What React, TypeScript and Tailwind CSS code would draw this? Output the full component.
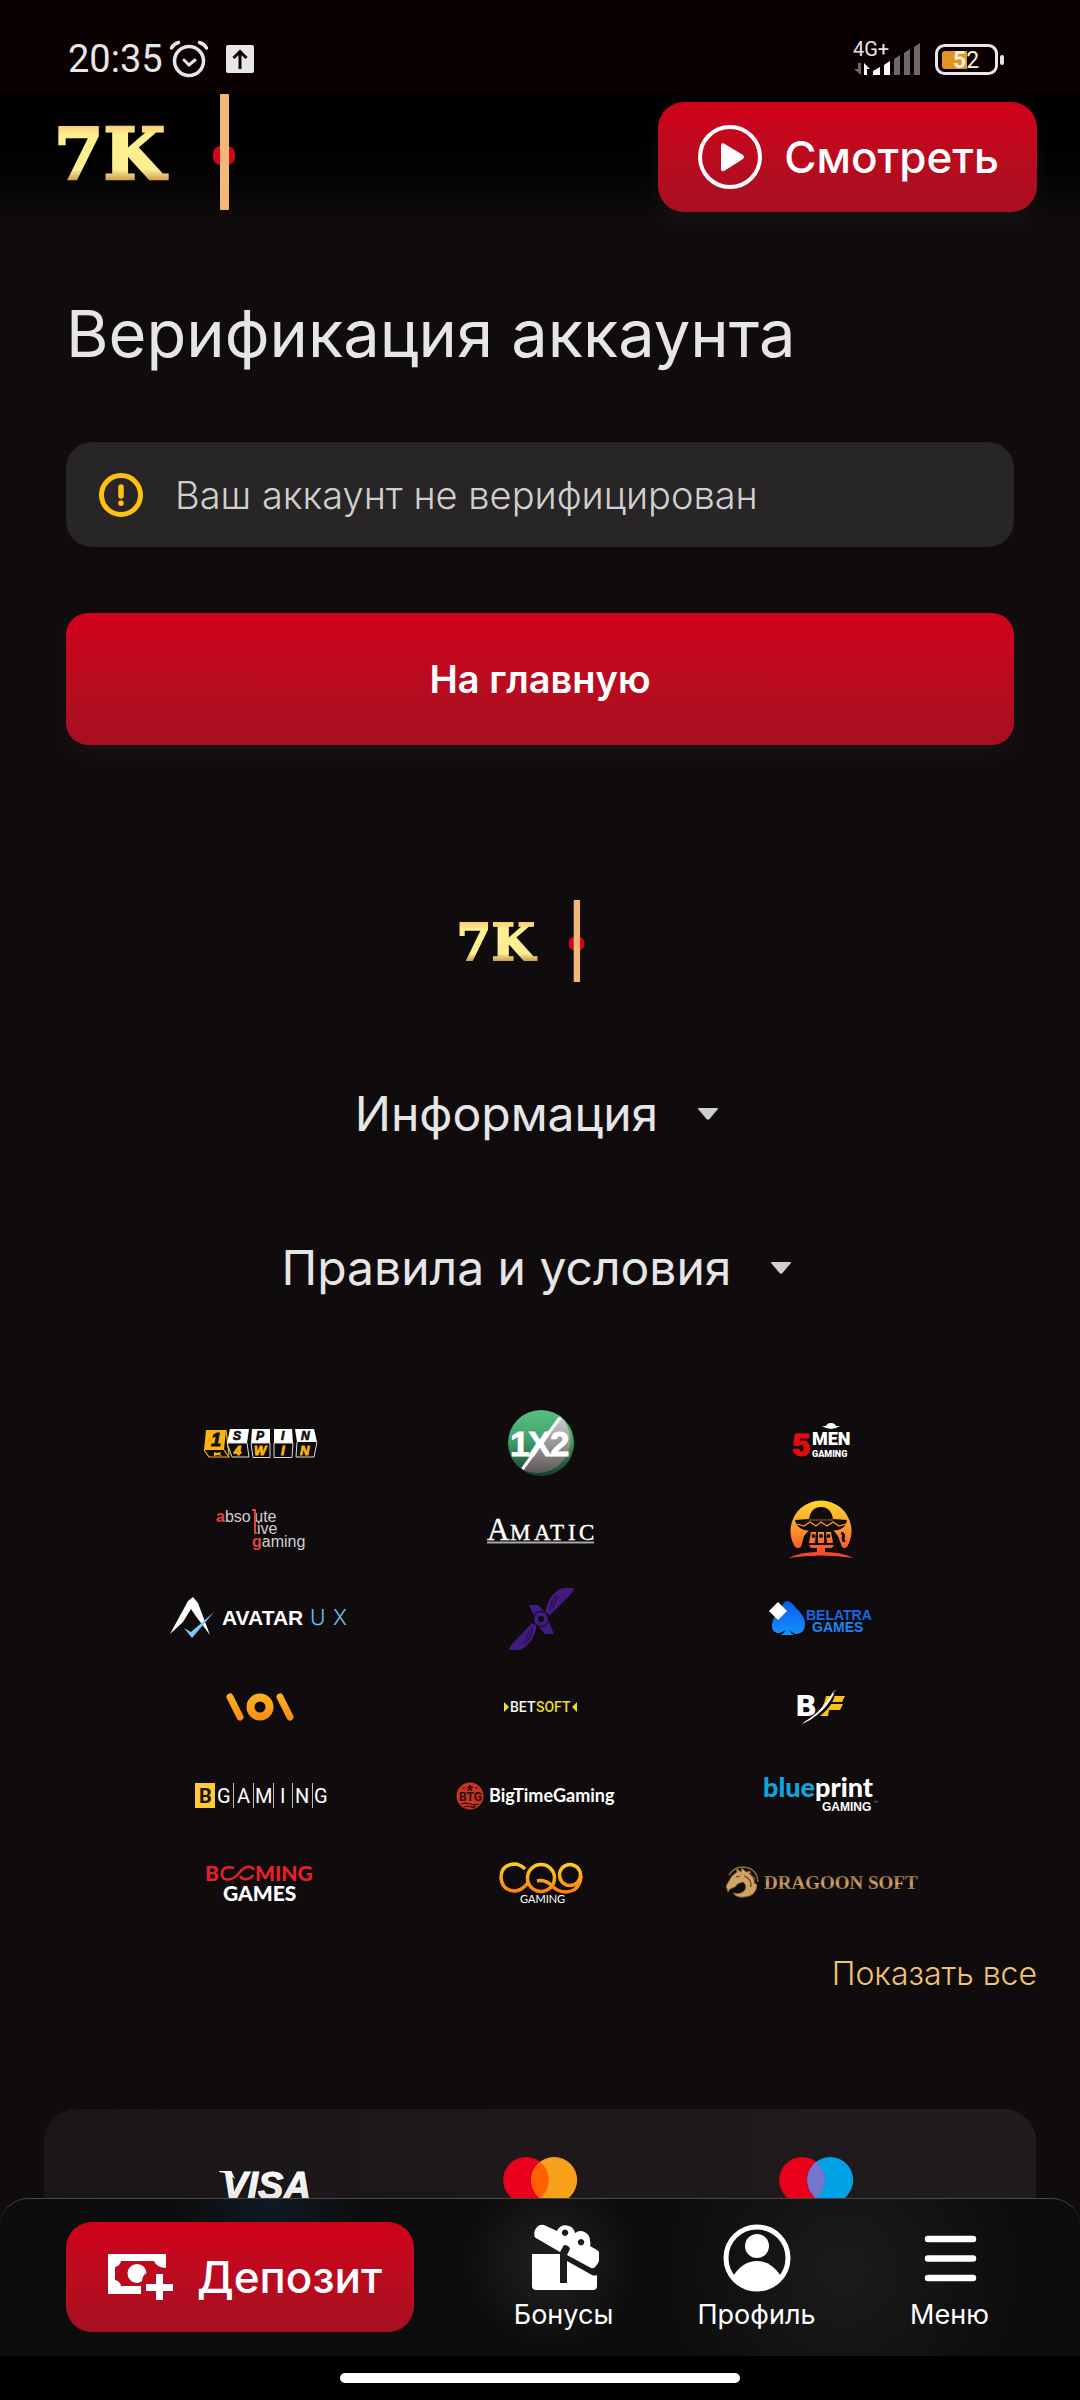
import React from "react";

type LogoProps = { label: string; children: React.ReactNode };

function Logo({ label, children }: LogoProps) {
  return (
    <a href="#" aria-label={label} className="flex h-[88px] items-center justify-center">
      <svg width="280" height="88" viewBox="0 0 280 88" role="img" aria-label={label}>
        {children}
      </svg>
    </a>
  );
}

const grotesk = "Roboto,sans-serif";
const arial = "'Liberation Sans',sans-serif";

function Brand({ id, className }: { id: string; className: string }) {
  return (
    <svg viewBox="0 0 180 116" className={className} role="img" aria-label="7K">
      <defs>
        <linearGradient id={id} x1="0" y1="30" x2="0" y2="87" gradientUnits="userSpaceOnUse">
          <stop offset="0" stopColor="#fdc66f" />
          <stop offset="0.2" stopColor="#fdf08f" />
          <stop offset="0.8" stopColor="#fbee93" />
          <stop offset="1" stopColor="#c8974b" />
        </linearGradient>
      </defs>
      <text
        x="-2"
        y="85"
        fontFamily="'DejaVu Serif',serif"
        fontWeight="700"
        fontSize="71"
        fill={`url(#${id})`}
        stroke={`url(#${id})`}
        strokeWidth="2.500"
      >
        7K
      </text>
      <ellipse cx="168" cy="46" rx="4" ry="6" fill="#c8081c" />
      <rect x="157" y="52" width="22" height="19" rx="8" fill="#d3041b" />
      <rect x="164" y="0" width="9" height="116" rx="1" fill="#f2b877" />
    </svg>
  );
}

function ProviderGrid() {
  return (
    <div className="mx-auto mt-[53px] grid w-full max-w-[840px] grid-cols-3">
      <Logo label="1spin4win">
        <path d="M86 32h20l-2 20H84z" fill="#fdb40c" />
        <path d="M84 52l5 7h20l-5-7M106 32l3 25" fill="none" stroke="#fdb40c" strokeWidth="1.2" />
        <path d="M94 54l3 1 4-1-1 2 2 2-4-1-4 1z" fill="#fdb40c" />
        <path d="M110 31h19l-2 14h-20zM132 31h18v14h-19zM154 31h18l1 14h-19zM175 31h19l3 13h-20z" fill="#fff" />
        <path
          d="M107 45l5 14h17l-2-14zM131 45l2 14.500h17V45zM154 45v14.500h18l1-14.500zM177 44l-1 15h18l3-15"
          fill="#0d0b0b"
          stroke="#ddd"
          strokeWidth="1"
        />
        <g fontFamily={arial} fontWeight="700" fontStyle="italic">
          <text x="91" y="48" fontSize="18" fill="#111" stroke="#111">1</text>
          <g fontSize="12" fill="#111" stroke="#111" strokeWidth="0.7">
            <text x="113" y="42">S</text>
            <text x="136" y="42">P</text>
            <text x="161" y="42">I</text>
            <text x="181" y="42">N</text>
          </g>
          <g fontSize="13" fill="#fdb40c" stroke="#fdb40c" strokeWidth="0.8">
            <text x="114" y="57">4</text>
            <text x="134" y="57">W</text>
            <text x="161" y="57">I</text>
            <text x="180" y="57">N</text>
          </g>
        </g>
      </Logo>
      <Logo label="1X2">
        <defs>
          <linearGradient id="gGreen" x1="0" y1="0" x2="0" y2="1">
            <stop offset="0" stopColor="#55c183" />
            <stop offset="0.45" stopColor="#43a16b" />
            <stop offset="1" stopColor="#143f27" />
          </linearGradient>
          <linearGradient id="gGrey" x1="0" y1="0" x2="0" y2="1">
            <stop offset="0" stopColor="#d0cfcf" />
            <stop offset="1" stopColor="#5d5857" />
          </linearGradient>
        </defs>
        <circle cx="141" cy="45" r="33" fill="url(#gGreen)" />
        <path d="M160.500 18.500A33 33 0 0 1 122.500 71.500z" fill="url(#gGrey)" />
        <path d="M160 19.500L122.500 71" stroke="#fff" strokeWidth="3" />
        <g fontFamily={arial} fontWeight="700" fontSize="35" fill="#fff" stroke="#fff" strokeWidth="0.8">
          <text x="110" y="58">1</text>
          <text x="128" y="58">X</text>
          <text x="150" y="58">2</text>
        </g>
      </Logo>
      <Logo label="5Men Gaming">
        <g fontFamily={grotesk} fontWeight="900">
          <text x="112" y="58" fontSize="32" fill="#e30b0b" stroke="#e30b0b">5</text>
          <text x="132" y="47" fontSize="18" fill="#fff">MEN</text>
          <text x="132" y="59" fontSize="9" fill="#fff">GAMING</text>
        </g>
        <path d="M142 28q9 6 18 0l-4 0q-1-3-5-3t-5 3z" fill="#fff" />
      </Logo>

      <Logo label="absolute live gaming">
        <g fontFamily={arial} fontSize="16" fill="#cfcfcf">
          <text x="96" y="36">
            <tspan fill="#e0433c" fontWeight="700">a</tspan>bso
            <tspan fill="#100c0d">l</tspan>ute
          </text>
          <text x="137" y="48">ive</text>
          <text x="132" y="61">
            <tspan fill="#e0433c" fontWeight="700">g</tspan>aming
          </text>
        </g>
        <path d="M132 24h3v23h2" fill="none" stroke="#e0433c" strokeWidth="2" />
      </Logo>
      <Logo label="Amatic">
        <g fontFamily="'Liberation Serif',serif" fill="#fff" stroke="#fff" strokeWidth="0.4">
          <text x="87" y="54" fontSize="31">A</text>
          <g fontSize="23">
            <text x="110" y="54">M</text>
            <text x="134" y="54">A</text>
            <text x="150" y="54">T</text>
            <text x="168" y="54">I</text>
            <text x="179" y="54">C</text>
          </g>
        </g>
        <path d="M87 56.500h107" stroke="#a5a5a5" strokeWidth="2" />
      </Logo>
      <Logo label="Amigo Gaming">
        <defs>
          <linearGradient id="gSun" x1="0" y1="17" x2="0" y2="73" gradientUnits="userSpaceOnUse">
            <stop offset="0" stopColor="#fed42b" />
            <stop offset="0.5" stopColor="#fd8f2c" />
            <stop offset="1" stopColor="#f5382f" />
          </linearGradient>
        </defs>
        <path d="M115 61a30.500 30.500 0 1 1 52 0q-3 2-5 0l-4-11-5-6h-24l-5 6-3 11q-3 2-6 0z" fill="url(#gSun)" />
        <path d="M129 33q2-12 12-12t12 12l14 1q-1 8-9 10-17 3-34 0-8-3-9-10z" fill="#120d0c" />
        <path d="M117 38l7 2 6-4 6 4 5-4 6 4 6-4 6 4 7-2" fill="none" stroke="url(#gSun)" strokeWidth="1.200" />
        <path d="M129 34h24" stroke="#a0641f" strokeWidth="1" />
        <path d="M131 46h5l-1 11h-6zM138 46h6v11h-6zM146 46h5l2 11h-6z" fill="url(#gSun)" />
        <circle cx="133.500" cy="50" r="2" fill="#120d0c" />
        <circle cx="141" cy="50" r="2" fill="#120d0c" />
        <circle cx="148.500" cy="50" r="2" fill="#120d0c" />
        <path d="M161 47q4 1 2 5l1 4" stroke="#120d0c" strokeWidth="3" fill="none" />
        <path d="M129 59h25l-2 3h-7v4q16 0 29 6-33-5-66 0 13-6 29-6v-4h-6z" fill="url(#gSun)" />
      </Logo>

      <Logo label="Avatar UX">
        <path d="M73 23l5 6 12 32-15-20-4-6-8 13-13 12 18-33z" fill="#fff" />
        <path d="M64 54l7 4 23-20-22 26z" fill="#7cc9f0" />
        <text x="102" y="51" fontFamily={arial} fontWeight="700" fontSize="21" fill="#fff">AVATAR</text>
        <text x="190" y="51" fontFamily="Inter,sans-serif" fontWeight="300" fontSize="21" fill="#6fc1ee">U</text>
        <text x="213" y="51" fontFamily="Inter,sans-serif" fontWeight="300" fontSize="21" fill="#6fc1ee">X</text>
      </Logo>
      <Logo label="X">
        <path d="M145 39q3-16 12-22 3-3 8-3h9q0 3-5 8L150 41z" fill="#431a80" />
        <path d="M137 51q-3 16-12 22-3 3-8 3h-8q0-3 5-8l18-19z" fill="#431a80" />
        <path d="M129 31h9l7 7 9 22h-9l-7-8z" fill="#431a80" />
        <path d="M150 37q1-11 7-16M153 34q1-7 6-12M132 54q-1 11-7 16M129 57q-1 7-6 12" stroke="#1c0e2e" strokeWidth="1" fill="none" />
        <circle cx="141" cy="45" r="8" fill="#100c0d" />
        <circle cx="141" cy="45" r="5" fill="none" stroke="#431a80" strokeWidth="4" />
      </Logo>
      <Logo label="Belatra Games">
        <defs>
          <linearGradient id="gBlue" x1="0" y1="0" x2="0" y2="1">
            <stop offset="0" stopColor="#0c5bea" />
            <stop offset="1" stopColor="#1590ff" />
          </linearGradient>
        </defs>
        <path
          d="M107 27q4 0 9 7 9 8 9 16 0 9-8 10-4 0-7-4 1 4 4 5h-14q4-1 5-5-4 4-8 3-6-2-5-9 1-7 8-15 4-8 7-8z"
          fill="url(#gBlue)"
        />
        <path d="M98 28l9 9-9 9-9-9z" fill="#fff" />
        <g fontFamily={arial} fontWeight="700" fontSize="14">
          <text x="126" y="46" fill="#1767e8">BELATRA</text>
          <text x="132" y="58" fill="#1b86f8">GAMES</text>
        </g>
      </Logo>

      <Logo label="Barbara Bang">
        <defs>
          <linearGradient id="gOrange" x1="0" y1="31" x2="0" y2="59" gradientUnits="userSpaceOnUse">
            <stop offset="0" stopColor="#fcb41f" />
            <stop offset="1" stopColor="#f98b1d" />
          </linearGradient>
        </defs>
        <g stroke="url(#gOrange)" fill="none" strokeLinecap="round">
          <path d="M110 35l10 20M160 35l10 20" strokeWidth="7" />
          <circle cx="140" cy="45" r="9.500" strokeWidth="8" />
        </g>
      </Logo>
      <Logo label="Betsoft">
        <path d="M104 40l5 5-5 5zM177 40l-5 5 5 5z" fill="#f0e120" />
        <g fontFamily={grotesk} fontSize="14" fontWeight="500">
          <text x="110" y="50" fill="#f4f4f4">BET</text>
          <text x="136" y="50" fill="#e9d92a">SOFT</text>
        </g>
      </Logo>
      <Logo label="BF Games">
        <text x="115" y="54" fontFamily="'DejaVu Sans',sans-serif" fontWeight="700" fontSize="29" fill="#fff">B</text>
        <path d="M146 34h19l-3 6h-12l-2 2h15l-3 6h-11l-1 6h-13q9-8 11-20z" fill="#fcc21a" />
        <path d="M154 30q-2 13-14 22-6 5-13 8" stroke="#100c0d" strokeWidth="3" fill="none" />
        <path d="M157 27l-4 4 1 1q-6 12-17 21-6 5-13 8l-2 3 2-4q14-8 24-22l5-8z" fill="#fff" />
      </Logo>

      <Logo label="BGaming">
        <path d="M75 33h20v25H75z" fill="#fccb35" />
        <text x="79" y="53" fontFamily={grotesk} fontWeight="700" fontSize="20" fill="#1b1407">B</text>
        <g fontFamily={grotesk} fontSize="20" fill="#fff">
          <text x="97" y="53">G</text>
          <text x="117" y="53">A</text>
          <text x="135" y="53">M</text>
          <text x="160" y="53">I</text>
          <text x="175" y="53">N</text>
          <text x="194" y="53">G</text>
        </g>
        <path d="M113.500 33v25M133.500 33v25M153.500 33v25M172.500 33v25M192.500 33v25" stroke="#bdbdbd" strokeWidth="1" />
      </Logo>
      <Logo label="Big Time Gaming">
        <circle cx="70" cy="46" r="13.500" fill="#c83425" />
        <path d="M70 35l1 2h2l-1.500 1.500.5 2-2-1-2 1 .5-2L67 37h2zM62 38h3M75 38h3M61 54q5-2 9 0t9 0M64 57q4-2 7 0t5-1" fill="#2c0d0a" stroke="#2c0d0a" strokeWidth="0.800" />
        <text x="59" y="51" fontFamily={grotesk} fontWeight="700" fontSize="12" fill="#2c0d0a">BTG</text>
        <text x="89" y="52" fontFamily="Lato,sans-serif" fontWeight="700" fontSize="18" fill="#fff">BigTimeGaming</text>
      </Logo>
      <Logo label="Blueprint Gaming">
        <text x="83" y="47" fontFamily="Lato,sans-serif" fontWeight="900" fontSize="27" fill="#fff">
          <tspan fill="#0fa6dd">blue</tspan>print
        </text>
        <text x="142" y="61" fontFamily={arial} fontWeight="700" fontSize="12" fill="#fff">GAMING</text>
        <text x="193" y="54" fontFamily={arial} fontSize="5" fill="#888">™</text>
      </Logo>

      <Logo label="Booming Games">
        <g fontFamily="Lato,sans-serif" fontWeight="900" fontSize="21">
          <text x="85" y="43" fill="#e3212b">B</text>
          <text x="135" y="43" fill="#e3212b">MING</text>
          <text x="103" y="63" fill="#fff">GAMES</text>
        </g>
        <path
          d="M114 30q-11-3-12 5t9 6q4-1 8-6t8-6q5-1 7 3M120 38q3 4 7 3 5-1 6-4"
          fill="none"
          stroke="#e3212b"
          strokeWidth="2.500"
        />
      </Logo>
      <Logo label="CQ9 Gaming">
        <defs>
          <linearGradient id="gCq" x1="0" y1="25" x2="0" y2="55" gradientUnits="userSpaceOnUse">
            <stop offset="0" stopColor="#ffd21a" />
            <stop offset="1" stopColor="#fd7d0f" />
          </linearGradient>
        </defs>
        <g fill="none" stroke="url(#gCq)" strokeWidth="3.500">
          <path d="M125 31q-5-5-11-5-13 1-13 14 1 12 13 13 6 0 11-5" />
          <circle cx="141" cy="40" r="13.500" />
          <path d="M125 48l4-4M137 43q9-2 16 6 6 5 13 5 14-1 15-16" />
          <circle cx="170" cy="37" r="10.500" />
        </g>
        <text x="120" y="65" fontFamily="Lato,sans-serif" fontSize="11" fill="#fff">GAMING</text>
      </Logo>
      <Logo label="Dragoon Soft">
        <defs>
          <linearGradient id="gGold" x1="0" y1="37" x2="0" y2="54" gradientUnits="userSpaceOnUse">
            <stop offset="0" stopColor="#8a6234" />
            <stop offset="0.5" stopColor="#d0a467" />
            <stop offset="1" stopColor="#86592b" />
          </linearGradient>
        </defs>
        <path d="M49 37q5-8 14-8 14 1 15 15" fill="none" stroke="#8b6a3d" strokeWidth="1.500" />
        <path
          d="M46 48l6-10 5-4-1-4 5 4 1-4 4 4 4-1 1 4 4 3-1 4 3 3q-1 11-12 12-9 1-12-4 7 2 11-2 4-5-1-9-6 1-8 5l-5 2-2 3z"
          fill="#cfa368"
          stroke="#7c5a31"
          strokeWidth="0.800"
        />
        <path d="M56 39l4-1M64 38q8 3 7 11M69 35q6 4 6 11" fill="none" stroke="#5b3d1c" strokeWidth="1.200" />
        <text x="84" y="51" fontFamily="'Liberation Serif',serif" fontWeight="700" fontSize="19" fill="url(#gGold)">
          DRAGOON SOFT
        </text>
      </Logo>
    </div>
  );
}

function StatusBar() {
  return (
    <div className="flex h-[94px] shrink-0 items-center bg-[#0a0001] pt-[24px] pr-[76px] pl-[68px] font-['Roboto'] text-[#e8e6e6]">
      <span className="text-[38px] leading-[40px]">20:35</span>
      <svg viewBox="0 0 40 38" className="ml-[6px] h-[38px] w-[40px]" fill="none" stroke="#e8e6e6" strokeLinecap="round">
        <circle cx="20" cy="21" r="14.500" strokeWidth="3.500" />
        <path d="M15 20l5 5 6-5" strokeWidth="3" />
        <path d="M2.500 8q2-4 7-5.500M37.500 8q-2-4-7-5.500" strokeWidth="3.500" />
      </svg>
      <svg viewBox="0 0 28 28" className="ml-[17px] h-[28px] w-[28px]">
        <rect width="28" height="28" rx="2" fill="#e8e6e6" />
        <path d="M14 24V7M7.500 13L14 6.500 20.500 13" fill="none" stroke="#0a0001" strokeWidth="3" />
      </svg>
      <svg viewBox="0 -6 154 48" className="ml-auto h-[48px] w-[154px]" role="img" aria-label="4G+ 52">
        <text x="3" y="15" fontSize="20" fill="#e8e6e6" fontFamily="Roboto,sans-serif">4G+</text>
        <path d="M11 22v12L4 28h4v-6z" fill="#6d6969" />
        <path d="M14 34V22l6 6h-3v6z" fill="#fff" />
        <path d="M23 30l7-4v8h-7zM34 24l6-4v14h-6z" fill="#fff" />
        <path d="M44 18l6-4v20h-6zM54 12l6-4v26h-6zM64 6l6-4v32h-6z" fill="#6d6969" />
        <rect x="86.500" y="4.500" width="60" height="28" rx="8" fill="none" stroke="#e8e6e6" strokeWidth="3" />
        <path d="M95 10h22v18H95a3 3 0 0 1-3-3V13a3 3 0 0 1 3-3z" fill="#e09722" />
        <rect x="150" y="14" width="4" height="10" rx="2" fill="#e8e6e6" />
        <text x="103" y="27" fontSize="23" fill="#f6eede" fontFamily="Roboto,sans-serif">
          <tspan fontWeight="700">5</tspan>2
        </text>
      </svg>
    </div>
  );
}

function Caret() {
  return (
    <svg viewBox="0 0 20 12" className="mr-[7px] ml-[40px] h-[12px] w-[20px]">
      <path d="M1 0h18q2 0 .5 1.500L11.500 11q-1.500 1.500-3 0L.5 1.500Q-1 0 1 0z" fill="#cfcfcf" />
    </svg>
  );
}

function NavItem({ label, children }: { label: string; children: React.ReactNode }) {
  return (
    <a href="#" className="flex w-[193px] flex-col items-center text-[27px] leading-[40px] text-white">
      <svg viewBox="0 0 70 70" className="mb-[3px] h-[70px] w-[70px]">
        {children}
      </svg>
      {label}
    </a>
  );
}

export default function App() {
  return (
    <div className="flex h-screen flex-col overflow-hidden bg-[#100c0d] font-['Inter','Noto_Sans',sans-serif] text-[#e6e6e6]">
      <StatusBar />
      <header className="flex shrink-0 items-start justify-between bg-linear-to-b from-black to-[#100c0d] pr-[43px] pb-[10px] pl-[56px]">
        <a href="#" aria-label="7K">
          <Brand id="brandTop" className="h-[116px] w-[180px]" />
        </a>
        <button className="mt-[8px] flex h-[110px] items-center gap-[22px] rounded-[26px] bg-linear-to-b from-[#d00119] to-[#a61022] pr-[38px] pl-[40px] text-[44px] leading-[50px] font-medium text-white shadow-[0_8px_24px_rgba(255,255,255,0.05)]">
          <svg viewBox="0 0 64 64" className="h-[64px] w-[64px]">
            <circle cx="32" cy="32" r="30" fill="none" stroke="#fff" strokeWidth="4" />
            <path d="M23 20.500q0-3 3-2l19 11.500q2 2 0 4L26 46q-3 1-3-2z" fill="#fff" />
          </svg>
          Смотреть
        </button>
      </header>

      <main className="min-h-0 flex-1 overflow-y-auto [scrollbar-width:none]">
        <section className="px-[66px] pt-[72px]">
          <h1 className="text-[65px] leading-[80px]">Верификация аккаунта</h1>
          <div className="mt-[68px] flex h-[105px] items-center gap-[32px] rounded-[26px] bg-[#272526] px-[33px] text-[38px] leading-[48px] font-light text-[#cfcfcf]">
            <svg viewBox="0 0 44 44" className="h-[44px] w-[44px]">
              <circle cx="22" cy="22" r="19.500" fill="none" stroke="#fdc113" strokeWidth="5" />
              <path d="M22 14v9M22 30v.2" stroke="#fdc113" strokeWidth="5.500" strokeLinecap="round" />
            </svg>
            Ваш аккаунт не верифицирован
          </div>
          <button className="mt-[66px] flex h-[132px] w-full items-center justify-center rounded-[22px] bg-linear-to-b from-[#d00119] to-[#a61022] text-[38px] leading-[48px] font-semibold text-white shadow-[0_8px_24px_rgba(255,255,255,0.04)]">
            На главную
          </button>
        </section>

        <footer className="flex flex-col">
          <a href="#" aria-label="7K" className="mt-[155px] self-center pr-[37px]">
            <Brand id="brandFooter" className="h-[82px] w-[127px]" />
          </a>
          <button className="mt-[55px] flex h-[154px] items-center justify-center text-[48px] leading-[60px]">
            Информация
            <Caret />
          </button>
          <button className="flex h-[154px] items-center justify-center text-[48px] leading-[60px]">
            Правила и условия
            <Caret />
          </button>
          <ProviderGrid />
          <a href="#" className="mt-[24px] mr-[43px] self-end text-[32px] leading-[48px] font-light text-[#f2c273]">
            Показать все
          </a>
          <div className="mx-[44px] mt-[111px] grid grid-cols-3 rounded-[32px] bg-linear-to-r from-[#1a1617] to-[#201c1d] px-[83px] py-[36px]">
            <svg viewBox="0 0 275 80" className="h-[80px] w-full" role="img" aria-label="Visa">
              <defs>
                <linearGradient id="gVisa" x1="0" y1="0" x2="0" y2="1">
                  <stop offset="0" stopColor="#fff" />
                  <stop offset="1" stopColor="#ddd" />
                </linearGradient>
              </defs>
              <text x="95" y="54" fontFamily={arial} fontWeight="700" fontStyle="italic" fontSize="38" fill="url(#gVisa)" stroke="#fff">
                VISA
              </text>
              <path d="M92 26h12l4 8q-6-6-16-7z" fill="#fff" />
            </svg>
            <svg viewBox="0 0 275 80" className="h-[80px] w-full" role="img" aria-label="Mastercard">
              <circle cx="124" cy="35" r="23" fill="#eb001b" />
              <circle cx="152" cy="35" r="23" fill="#f9a01b" />
              <path d="M138 17a23 23 0 0 1 0 36 23 23 0 0 1 0-36z" fill="#ff5f00" />
            </svg>
            <svg viewBox="0 0 275 80" className="h-[80px] w-full" role="img" aria-label="Maestro">
              <circle cx="124" cy="35" r="23" fill="#eb001b" />
              <circle cx="152" cy="35" r="23" fill="#00a2e5" />
              <path d="M138 17a23 23 0 0 1 0 36 23 23 0 0 1 0-36z" fill="#7375cf" />
            </svg>
          </div>
        </footer>
      </main>

      <nav className="flex h-[158px] shrink-0 items-start justify-between rounded-t-[28px] border-t border-[#48484a] bg-[#0d0c0c] bg-[radial-gradient(circle_at_25%_0%,#0f1a24_0%,transparent_12%),radial-gradient(circle_at_51%_40%,#22201f_0%,transparent_16%),radial-gradient(circle_at_78%_45%,#1c1b1b_0%,transparent_22%)] pt-[23px] pr-[34px] pl-[66px]">
        <button className="flex h-[110px] items-center gap-[24px] rounded-[26px] bg-linear-to-b from-[#d00119] to-[#a61022] pr-[32px] pl-[42px] text-[44px] leading-[50px] font-medium text-white">
          <svg viewBox="0 0 65 46" className="h-[46px] w-[65px]">
            <path
              fillRule="evenodd"
              clipRule="evenodd"
              d="M0 0h58v14q-9 0-12-7H13q-1 5-6 6v13q5 1 6 6h20v8H0z"
              fill="#fff"
            />
            <path d="M29 10a9.500 9.500 0 0 1 9.500 9q-4 2-4.500 8-3 2-5 2a9.500 9.500 0 0 1 0-19z" fill="#fff" />
            <path d="M48 20h7v10h10v7H55v10h-7V37H38v-7h10z" fill="#fff" />
          </svg>
          Депозит
        </button>
        <div className="flex">
          <NavItem label="Бонусы">
            <path d="M3 32h28v29h7V39l25 14q3 1 5 0v11q0 4-4 4H7q-4 0-4-4z" fill="#fff" />
            <path
              fillRule="evenodd"
              d="M6 8q3-6 9-5l13 6a9.500 9.500 0 0 1 18 2 9.500 9.500 0 0 1 15 8q1 3 0 5l7 4q4 3 3 8-1 4-4 8-2 3-5 2L38 33l3-6q-1-4-6-4l-4 7L7 16q-3-2-1-8zM36 7.500a3.200 3.200 0 1 0 .1 0zM52 17a3.200 3.200 0 1 0 .1 0z"
              fill="#fff"
            />
          </NavItem>
          <NavItem label="Профиль">
            <circle cx="35" cy="36" r="31" fill="none" stroke="#fff" strokeWidth="5" />
            <circle cx="35" cy="24" r="12" fill="#fff" />
            <path d="M11 54q10-15 24-15t24 15q-9 14-24 14T11 54z" fill="#fff" />
          </NavItem>
          <NavItem label="Меню">
            <path d="M13 17h45M13 36.500h45M13 56h45" stroke="#fff" strokeWidth="6.500" strokeLinecap="round" />
          </NavItem>
        </div>
      </nav>
      <div className="flex h-[44px] shrink-0 items-center justify-center bg-black">
        <div className="h-[10px] w-[37%] rounded-full bg-white" />
      </div>
    </div>
  );
}
